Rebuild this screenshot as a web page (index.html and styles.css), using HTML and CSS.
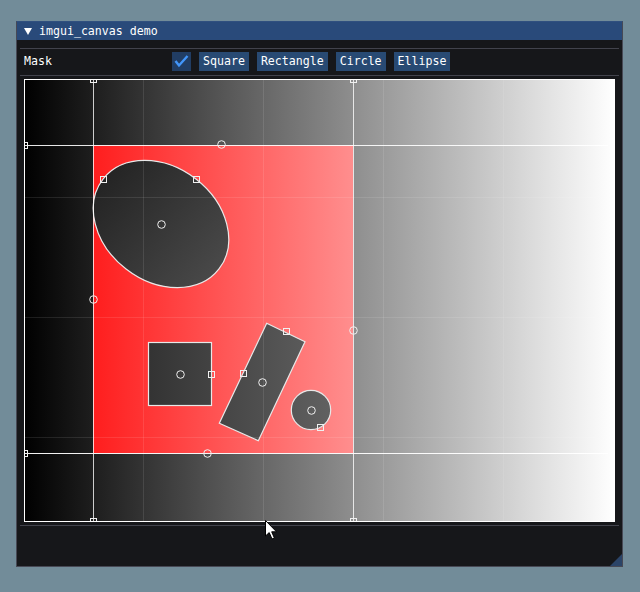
FILE: index.html
```html
<!DOCTYPE html>
<html>
<head>
<meta charset="utf-8">
<link rel="stylesheet" href="styles.css">
</head>
<body>
<div class="window">
  <div class="titlebar">
    <svg class="collapse" width="8" height="7" viewBox="0 0 8 7"><polygon points="0,0 8,0 4,7" fill="#fff"/></svg>
    <span class="title">imgui_canvas demo</span>
  </div>
  <div class="content">
    <div class="sep"></div>
    <div class="toolbar">
      <span class="label">Mask</span>
      <span class="checkbox"><svg width="19" height="19" viewBox="0 0 19 19"><polyline points="3.5,9 7,13.5 15.5,4" fill="none" stroke="#4296fa" stroke-width="2.4" stroke-linejoin="miter"/></svg></span>
      <button class="btn">Square</button>
      <button class="btn">Rectangle</button>
      <button class="btn">Circle</button>
      <button class="btn">Ellipse</button>
    </div>
    <div class="sep"></div>
    <div class="canvas">
      <svg width="591" height="443" viewBox="0 0 591 443">
        <defs>
          <linearGradient id="bg" x1="0" y1="0" x2="591" y2="0" gradientUnits="userSpaceOnUse"><stop offset="0" stop-color="#000"/><stop offset="1" stop-color="#fff"/></linearGradient>
          <linearGradient id="red" x1="0" y1="0" x2="591" y2="0" gradientUnits="userSpaceOnUse"><stop offset="0" stop-color="#ff0000"/><stop offset="1" stop-color="#ffffff"/></linearGradient>
          <linearGradient id="shape" x1="0" y1="0" x2="591" y2="0" gradientUnits="userSpaceOnUse"><stop offset="0" stop-color="#141414"/><stop offset="1" stop-color="#a8a8a8"/></linearGradient>
        </defs>
        <rect x="0" y="0" width="591" height="443" fill="url(#bg)"/>
        <rect x="69" y="66" width="260" height="308" fill="url(#red)"/>
        <g fill="url(#shape)" stroke="#e8e8e8" stroke-width="1.2">
          <ellipse cx="137" cy="145" rx="73.4" ry="57" transform="rotate(37.8 137 145)"/>
          <rect x="124.5" y="263.5" width="63" height="63"/>
          <polygon points="242.7,244.3 281,262.7 234.3,361.7 195.3,344.3"/>
          <circle cx="287" cy="331" r="19.7"/>
        </g>
        <g stroke="rgba(255,255,255,0.1)" stroke-width="1">
          <line x1="119.5" y1="0" x2="119.5" y2="443"/>
          <line x1="239.5" y1="0" x2="239.5" y2="443"/>
          <line x1="359.5" y1="0" x2="359.5" y2="443"/>
          <line x1="479.5" y1="0" x2="479.5" y2="443"/>
          <line x1="0" y1="118.5" x2="591" y2="118.5"/>
          <line x1="0" y1="238.5" x2="591" y2="238.5"/>
          <line x1="0" y1="358.5" x2="591" y2="358.5"/>
        </g>
        <g stroke="rgba(255,255,255,0.78)" stroke-width="1">
          <line x1="69.5" y1="0" x2="69.5" y2="443"/>
          <line x1="329.5" y1="0" x2="329.5" y2="443"/>
          <line x1="0" y1="66.5" x2="584" y2="66.5" stroke="rgba(255,255,255,0.9)"/>
          <line x1="0" y1="374.5" x2="584" y2="374.5" stroke="rgba(255,255,255,0.95)"/>
        </g>
        <g fill="none" stroke="#f0f0f0" stroke-width="1">
          <rect x="66.5" y="-2.5" width="6" height="6"/>
          <rect x="326.5" y="-2.5" width="6" height="6"/>
          <rect x="66.5" y="439.5" width="6" height="6"/>
          <rect x="326.5" y="439.5" width="6" height="6"/>
          <rect x="-2.5" y="63.5" width="6" height="6"/>
          <rect x="-2.5" y="371.5" width="6" height="6"/>
          <rect x="76.5" y="97.5" width="6" height="6"/>
          <rect x="169.5" y="97.5" width="6" height="6"/>
          <rect x="184.5" y="292.5" width="6" height="6"/>
          <rect x="259.5" y="249.5" width="6" height="6"/>
          <rect x="216.5" y="291.5" width="6" height="6"/>
          <rect x="293.5" y="345.5" width="6" height="6"/>
          <circle cx="197.5" cy="65.5" r="3.8"/>
          <circle cx="69.5" cy="220.5" r="3.8"/>
          <circle cx="329.5" cy="251.5" r="3.8"/>
          <circle cx="183.5" cy="374.5" r="3.8"/>
          <circle cx="137.5" cy="145.5" r="3.8"/>
          <circle cx="156.5" cy="295.5" r="3.8"/>
          <circle cx="238.5" cy="303.5" r="3.8"/>
          <circle cx="287.5" cy="331.5" r="3.8"/>
        </g>
        <rect x="0.5" y="0.5" width="590" height="442" fill="none" stroke="#fff" stroke-width="1"/>
      </svg>
    </div>
    <div class="sep"></div>
  </div>
  <div class="grip"></div>
</div>
<svg class="cursor" width="13" height="21" viewBox="0 0 13 21"><polygon points="0.5,0.5 0.5,16 4.2,12.6 7,19 9.4,18 6.7,11.8 11.5,11.8" fill="#fff" stroke="#000" stroke-width="1"/></svg>
</body>
</html>
```
FILE: styles.css
```css
* {
  box-sizing: border-box;
  margin: 0;
  padding: 0;
}

html, body {
  width: 640px;
  height: 592px;
  overflow: hidden;
}

body {
  background: #728c99;
  font-family: "DejaVu Sans Mono", "Liberation Mono", monospace;
  font-size: 11.6px;
  color: #ffffff;
  padding: 21px 0 0 16px;
}

.window {
  position: relative;
  width: 607px;
  height: 546px;
  background: #16171a;
  border: 1px solid #474955;
  border-top-color: #30507f;
  display: flex;
  flex-direction: column;
}

.titlebar {
  height: 18px;
  background: #294a7a;
  display: flex;
  align-items: center;
  padding-left: 7px;
  gap: 7px;
  line-height: 18px;
}

.collapse {
  display: block;
  flex: none;
}

.content {
  padding: 8px 3px 0 3px;
  display: flex;
  flex-direction: column;
}

.sep {
  height: 1px;
  background: #42434c;
}

.toolbar {
  display: flex;
  align-items: center;
  gap: 8px;
  height: 19px;
  margin: 3px 0 4px 4px;
}

.label {
  width: 140px;
  line-height: 19px;
}

.checkbox {
  width: 19px;
  height: 19px;
  background: #213d63;
  display: block;
}

.checkbox svg {
  display: block;
}

.btn {
  height: 19px;
  padding: 0 4px;
  background: #284a73;
  border: none;
  color: #ffffff;
  font: inherit;
  line-height: 19px;
}

.canvas {
  width: 591px;
  height: 443px;
  margin: 3px 0 3px 4px;
}

.canvas svg {
  display: block;
}

.grip {
  position: absolute;
  right: 0;
  bottom: 0;
  width: 12px;
  height: 12px;
  background: #2b4468;
  clip-path: polygon(100% 0, 100% 100%, 0 100%);
}

.cursor {
  position: absolute;
  left: 265px;
  top: 520px;
}
```
